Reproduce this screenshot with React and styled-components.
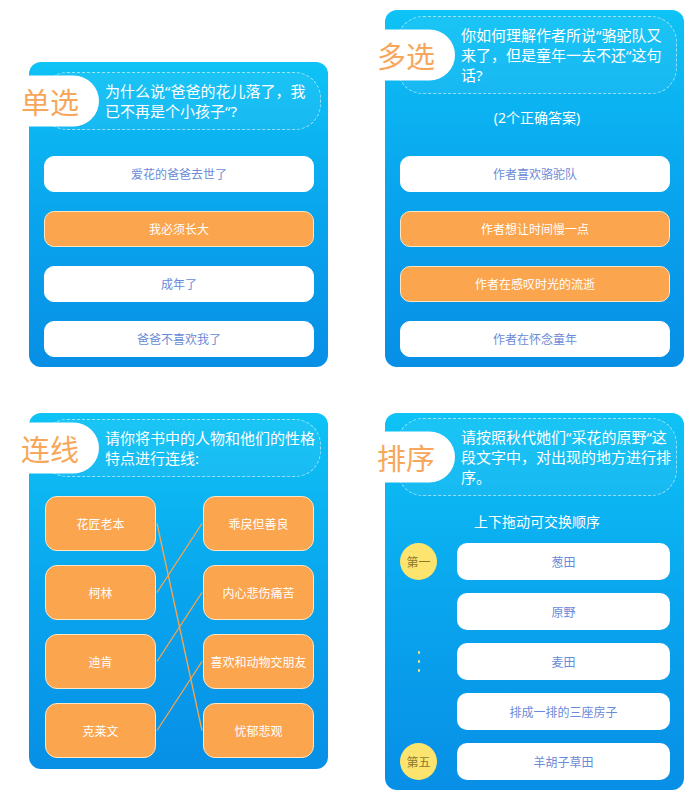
import React from "react";
import styled, { createGlobalStyle } from "styled-components";

const GlobalStyle = createGlobalStyle`
  html, body { margin: 0; padding: 0; background: #ffffff; }
  body {
    font-family: "Noto Sans", "Noto Sans CJK SC", sans-serif;
    -webkit-font-smoothing: antialiased;
  }
`;

const Page = styled.div`
  display: grid;
  grid-template-columns: 299px 299px;
  column-gap: 57px;
  row-gap: 46px;
  padding: 10px 0 0 29px;
  width: 695px;
  box-sizing: border-box;
`;

const Card = styled.section`
  align-self: ${(p) => p.$align || "start"};
  background: linear-gradient(180deg, #0ec3f5 0%, #09a5ee 50%, #078fe6 100%);
  border-radius: 12px;
  padding: ${(p) => p.$pt}px 7px ${(p) => p.$pb}px 12px;
  display: flex;
  flex-direction: column;
`;

const Bubble = styled.div`
  position: relative;
  border: 1px dashed rgba(255, 255, 255, 0.55);
  border-radius: 26px;
  background: rgba(255, 255, 255, 0.05);
  padding: 8px 8px 8px 63px;
  color: #ffffff;
  font-size: 15px;
  line-height: 20px;
  white-space: nowrap;
`;

const Badge = styled.div`
  position: absolute;
  left: -25px;
  top: 50%;
  transform: translateY(-50%);
  width: 82px;
  height: 51px;
  box-sizing: border-box;
  background: #ffffff;
  border-radius: 0 26px 26px 0;
  display: flex;
  align-items: center;
  padding-left: 4px;
  font-family: "Noto Sans CJK SC", sans-serif;
  font-weight: 400;
  font-size: 29px;
  line-height: 1;
  color: #f7a75b;
`;

const Note = styled.div`
  margin-top: ${(p) => p.$mt}px;
  text-align: center;
  color: #ffffff;
  font-size: 14px;
  line-height: 20px;
`;

const OptionList = styled.div`
  display: flex;
  flex-direction: column;
  gap: 19px;
  margin: ${(p) => p.$mt}px 7px 0 3px;
`;

const Option = styled.div`
  height: 36px;
  box-sizing: border-box;
  border-radius: 10px;
  display: flex;
  align-items: center;
  justify-content: center;
  font-size: 12px;
  background: ${(p) => (p.$on ? "#fba54f" : "#ffffff")};
  color: ${(p) => (p.$on ? "#ffffff" : "#6a8bd7")};
  border: 1px solid ${(p) => (p.$on ? "#ffe3bd" : "#ffffff")};
`;

const Match = styled.div`
  display: grid;
  grid-template-columns: 111px 47px 111px;
  grid-auto-rows: 55px;
  row-gap: 14px;
  margin: 19px 7px 0 4px;
`;

const MatchBox = styled.div`
  grid-column: ${(p) => p.$col};
  grid-row: ${(p) => p.$row};
  box-sizing: border-box;
  border-radius: 12px;
  background: #fba54f;
  border: 1.5px solid #ffe6c4;
  color: #ffffff;
  font-size: 12px;
  display: flex;
  align-items: center;
  justify-content: center;
`;

const Lines = styled.svg`
  grid-column: 2;
  grid-row: 1 / 5;
  width: 47px;
  height: 262px;
  display: block;
`;

const SortList = styled.div`
  display: flex;
  flex-direction: column;
  gap: 13px;
  margin: 11px 7px 0 3px;
`;

const SortRow = styled.div`
  display: grid;
  grid-template-columns: 37px 1fr;
  column-gap: 20px;
  align-items: center;
  height: 37px;
`;

const Rank = styled.div`
  width: 37px;
  height: 37px;
  border-radius: 50%;
  background: #fde46f;
  color: #8a7a30;
  font-size: 12px;
  display: flex;
  align-items: center;
  justify-content: center;
`;

const Dots = styled.div`
  display: flex;
  flex-direction: column;
  align-items: center;
  gap: 6px;
`;

const Dot = styled.span`
  width: 2px;
  height: 3px;
  border-radius: 1px;
  background: #fde46f;
`;

const SortItem = styled.div`
  height: 37px;
  border-radius: 10px;
  background: #ffffff;
  color: #6a8bd7;
  font-size: 12px;
  display: flex;
  align-items: center;
  justify-content: center;
`;

const Q = ({ tag, lines }) => (
  <Bubble>
    <Badge>{tag}</Badge>
    {lines.map((l, i) => (
      <div key={i}>{l}</div>
    ))}
  </Bubble>
);

const leftNames = ["花匠老本", "柯林", "迪肯", "克莱文"];
const rightNames = ["乖戾但善良", "内心悲伤痛苦", "喜欢和动物交朋友", "忧郁悲观"];
const pairs = [
  [0, 3],
  [1, 0],
  [2, 1],
  [3, 2],
];
const cy = (i) => i * 69 + 27.5;

const sortItems = [
  { rank: "第一", text: "葱田" },
  { text: "原野" },
  { dots: true, text: "麦田" },
  { text: "排成一排的三座房子" },
  { rank: "第五", text: "羊胡子草田" },
];

export default function App() {
  return (
    <>
      <GlobalStyle />
      <Page>
        <Card $align="end" $pt={10} $pb={10}>
          <Q
            tag="单选"
            lines={["为什么说“爸爸的花儿落了，我", "已不再是个小孩子“?"]}
          />
          <OptionList $mt={26}>
            <Option>爱花的爸爸去世了</Option>
            <Option $on>我必须长大</Option>
            <Option>成年了</Option>
            <Option>爸爸不喜欢我了</Option>
          </OptionList>
        </Card>

        <Card $align="end" $pt={6} $pb={10}>
          <Q
            tag="多选"
            lines={[
              "你如何理解作者所说“骆驼队又",
              "来了，但是童年一去不还“这句",
              "话?",
            ]}
          />
          <Note $mt={14}>(2个正确答案)</Note>
          <OptionList $mt={28}>
            <Option>作者喜欢骆驼队</Option>
            <Option $on>作者想让时间慢一点</Option>
            <Option $on>作者在感叹时光的流逝</Option>
            <Option>作者在怀念童年</Option>
          </OptionList>
        </Card>

        <Card $pt={6} $pb={11}>
          <Q
            tag="连线"
            lines={["请你将书中的人物和他们的性格", "特点进行连线:"]}
          />
          <Match>
            {leftNames.map((n, i) => (
              <MatchBox key={n} $col={1} $row={i + 1}>
                {n}
              </MatchBox>
            ))}
            <Lines viewBox="0 0 47 262">
              {pairs.map(([a, b]) => (
                <line
                  key={a}
                  x1="1"
                  y1={cy(a)}
                  x2="46"
                  y2={cy(b)}
                  stroke="#f9a44c"
                  strokeWidth="1.3"
                />
              ))}
            </Lines>
            {rightNames.map((n, i) => (
              <MatchBox key={n} $col={3} $row={i + 1}>
                {n}
              </MatchBox>
            ))}
          </Match>
        </Card>

        <Card $pt={5} $pb={10}>
          <Q
            tag="排序"
            lines={[
              "请按照秋代她们“采花的原野“这",
              "段文字中，对出现的地方进行排",
              "序。",
            ]}
          />
          <Note $mt={16}>上下拖动可交换顺序</Note>
          <SortList>
            {sortItems.map((it) => (
              <SortRow key={it.text}>
                {it.rank ? (
                  <Rank>{it.rank}</Rank>
                ) : it.dots ? (
                  <Dots>
                    <Dot />
                    <Dot />
                    <Dot />
                  </Dots>
                ) : (
                  <span />
                )}
                <SortItem>{it.text}</SortItem>
              </SortRow>
            ))}
          </SortList>
        </Card>
      </Page>
    </>
  );
}
